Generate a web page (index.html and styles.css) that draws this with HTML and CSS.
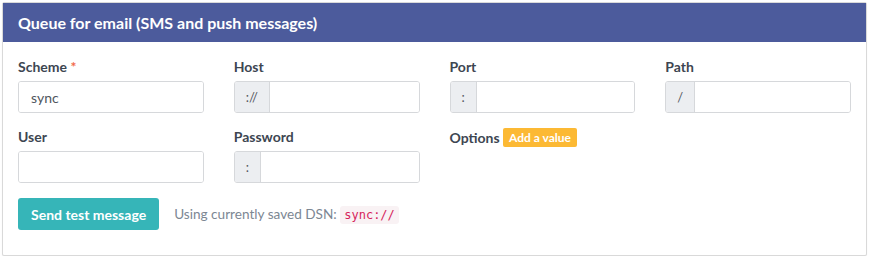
FILE: index.html
```html
<!DOCTYPE html>
<html lang="en">
<head>
    <meta charset="UTF-8">
    <title>Queue for email</title>
    <link rel="stylesheet" href="styles.css">
</head>
<body>
    <div class="card">
        <div class="card-header">Queue for email (SMS and push messages)</div>
        <div class="card-body">
            <div class="fields">
                <div class="field">
                    <label>Scheme <span class="required">*</span></label>
                    <div class="input-group">
                        <input type="text" value="sync">
                    </div>
                </div>
                <div class="field">
                    <label>Host</label>
                    <div class="input-group">
                        <span class="addon">://</span>
                        <input type="text">
                    </div>
                </div>
                <div class="field">
                    <label>Port</label>
                    <div class="input-group">
                        <span class="addon">:</span>
                        <input type="text">
                    </div>
                </div>
                <div class="field">
                    <label>Path</label>
                    <div class="input-group">
                        <span class="addon">/</span>
                        <input type="text">
                    </div>
                </div>
                <div class="field">
                    <label>User</label>
                    <div class="input-group">
                        <input type="text">
                    </div>
                </div>
                <div class="field">
                    <label>Password</label>
                    <div class="input-group">
                        <span class="addon">:</span>
                        <input type="text">
                    </div>
                </div>
                <div class="field">
                    <label>Options <span class="badge">Add a value</span></label>
                </div>
            </div>
            <div class="actions">
                <button class="btn-send">Send test message</button>
                <span class="dsn">Using currently saved DSN: <code>sync://</code></span>
            </div>
        </div>
    </div>
</body>
</html>
```
FILE: styles.css
```css
body {
    font-family: Lato, "Liberation Sans", sans-serif;
    margin: 0;
    padding: 2px 3px 0 2px;
    background-color: #ffffff;
    color: #3d4651;
}
.card {
    border: 1px solid #d9d9d9;
    border-radius: 2px;
    box-shadow: 0 1px 1px rgba(0, 0, 0, 0.08);
    background-color: #ffffff;
}
.card-header {
    background-color: #4c5b9c;
    color: #ffffff;
    font-size: 16px;
    font-weight: bold;
    height: 39px;
    line-height: 39px;
    padding: 0 15px;
}
.card-body {
    padding: 16px 15px 25px;
}
.fields {
    display: grid;
    grid-template-columns: repeat(4, minmax(0, 1fr));
    column-gap: 30px;
    row-gap: 15px;
}
.field label {
    display: block;
    font-size: 14px;
    font-weight: bold;
    line-height: 18px;
    margin-bottom: 5px;
    color: #3d4651;
}
.required {
    color: #f26a4b;
}
.badge {
    display: inline-block;
    background-color: #fcb934;
    color: #ffffff;
    font-size: 12px;
    font-weight: bold;
    line-height: 19px;
    padding: 0 6px;
    border-radius: 2px;
    vertical-align: 1px;
}
.input-group {
    display: flex;
    height: 32px;
    border: 1px solid #d6d8db;
    border-radius: 3px;
    box-sizing: border-box;
    overflow: hidden;
}
.addon {
    display: flex;
    align-items: center;
    padding: 0 11px;
    background-color: #eceef1;
    border-right: 1px solid #d6d8db;
    font-size: 13px;
    color: #55595f;
}
.input-group input {
    flex: 1;
    min-width: 0;
    border: none;
    outline: none;
    padding: 0 12px;
    font-family: Lato, "Liberation Sans", sans-serif;
    font-size: 14px;
    color: #50565d;
    background: #ffffff;
}
.actions {
    display: flex;
    align-items: center;
    gap: 15px;
    margin-top: 15px;
}
.btn-send {
    background-color: #36b5b8;
    color: #ffffff;
    border: none;
    border-radius: 3px;
    height: 32px;
    padding: 0 13px;
    font-family: Lato, "Liberation Sans", sans-serif;
    font-size: 14px;
    font-weight: bold;
}
.dsn {
    font-size: 13.6px;
    color: #7c8793;
}
.dsn code {
    font-family: "DejaVu Sans Mono", monospace;
    font-size: 12px;
    color: #d6245c;
    background-color: #f9f2f4;
    padding: 2px 4px;
    border-radius: 3px;
}
```
